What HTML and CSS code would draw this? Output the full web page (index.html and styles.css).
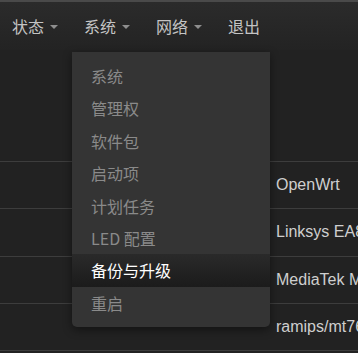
FILE: index.html
```html
<!DOCTYPE html>
<html lang="zh-CN">
<head>
<meta charset="utf-8">
<link rel="stylesheet" href="styles.css">
</head>
<body>
<header class="navbar">
  <ul class="nav">
    <li class="nav-item"><span>状态</span><i class="caret"></i></li>
    <li class="nav-item open"><span>系统</span><i class="caret"></i>
      <ul class="dropdown">
        <li>系统</li>
        <li>管理权</li>
        <li>软件包</li>
        <li>启动项</li>
        <li>计划任务</li>
        <li>LED 配置</li>
        <li class="active">备份与升级</li>
        <li>重启</li>
      </ul>
    </li>
    <li class="nav-item"><span>网络</span><i class="caret"></i></li>
    <li class="nav-item"><span>退出</span></li>
  </ul>
</header>
<main class="content">
  <div class="info">
    <div class="row"><div class="label"></div><div class="value">OpenWrt</div></div>
    <div class="row"><div class="label"></div><div class="value">Linksys EA8100</div></div>
    <div class="row"><div class="label"></div><div class="value">MediaTek MT7621</div></div>
    <div class="row"><div class="label"></div><div class="value">ramips/mt7621</div></div>
    <div class="row last"><div class="label"></div><div class="value"></div></div>
  </div>
</main>
</body>
</html>
```
FILE: styles.css
```css
html, body {
  margin: 0;
  padding: 0;
  background: #222222;
  overflow: hidden;
}
body {
  height: 353px;
  font-family: "Liberation Sans", "Noto Sans CJK SC", sans-serif;
  font-size: 16px;
  color: #cccccc;
}
.navbar {
  height: 48px;
  border-top: 2px solid #4a4a4a;
  background: linear-gradient(#2b2b2b, #232323);
  position: relative;
  z-index: 5;
}
.nav {
  list-style: none;
  margin: 0;
  padding: 0 0 0 12px;
  display: flex;
  height: 48px;
  align-items: center;
}
.nav-item {
  position: relative;
  display: flex;
  align-items: center;
  font-family: "Noto Sans CJK SC", sans-serif;
  color: #c4c4c4;
  line-height: 48px;
  margin-right: 26px;
}
.caret {
  display: inline-block;
  width: 0;
  height: 0;
  margin-left: 6px;
  margin-top: 1px;
  border-left: 4.5px solid transparent;
  border-right: 4.5px solid transparent;
  border-top: 4.5px solid #8e8e8e;
}
.dropdown {
  position: absolute;
  left: -12px;
  top: 50px;
  width: 198px;
  margin: 0;
  padding: 8px 0;
  list-style: none;
  background: #343434;
  border-radius: 0 0 5px 5px;
  box-shadow: 0 3px 10px rgba(0, 0, 0, 0.45);
}
.dropdown li {
  line-height: 32.4px;
  padding-left: 19px;
  color: #8a8a8a;
  white-space: nowrap;
}
.dropdown li.active {
  color: #ffffff;
  background: linear-gradient(#2a2a2a, #1b1b1b);
}
.content {
  padding-top: 111px;
}
.info {
  width: 100%;
  overflow: hidden;
}
.row {
  display: flex;
  align-items: center;
  height: 46.25px;
  border-top: 1px solid #3d3d3d;
}
.row.last {
  height: 1px;
}
.label {
  width: 276px;
  flex: none;
}
.value {
  flex: none;
  color: #cfcfcf;
  white-space: nowrap;
}
```
